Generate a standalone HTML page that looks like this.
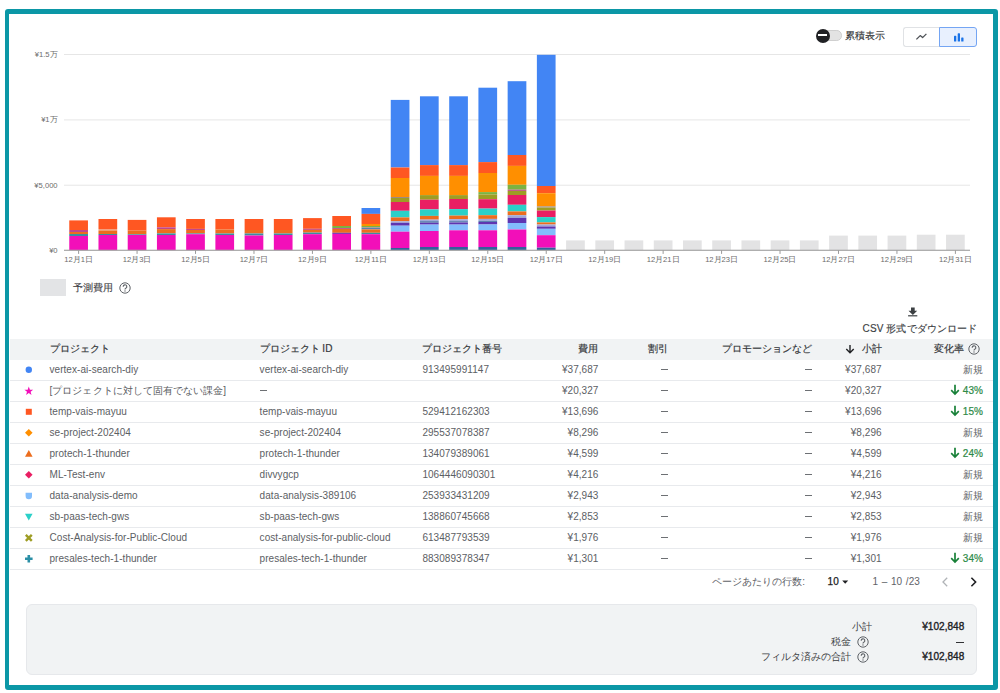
<!DOCTYPE html><html><head><meta charset="utf-8"><title>Billing report</title><style>
*{margin:0;padding:0;box-sizing:border-box}
html,body{width:1000px;height:693px;overflow:hidden;background:#fff}
body{position:relative;font-family:"Liberation Sans",sans-serif;color:#3c4043}
.frame{position:absolute;left:5px;top:9px;width:993px;height:681px;border-style:solid;border-color:#0b97a6;border-width:5px 5px 5px 4px;border-radius:3px}
.chart{position:absolute;left:0;top:0}
.xl{font-size:7.6px;fill:#6b6b6b;font-family:"Liberation Sans",sans-serif}
.yl{font-size:7.6px;fill:#6b6b6b;font-family:"Liberation Sans",sans-serif}
.abs{position:absolute;white-space:nowrap;line-height:1}
.t{font-size:10px;color:#5c6064;letter-spacing:0.05px}
.h{font-size:10px;color:#34373a;-webkit-text-stroke:0.18px #34373a}
.r{text-align:right}
.hdr{position:absolute;left:9.5px;top:339px;width:983px;height:20.5px;background:#f1f3f4}
.sep{position:absolute;left:9.5px;width:983px;height:1px;background:#e8eaed}
.green{color:#2d8a47;-webkit-text-stroke:0.2px #2d8a47}
.dash{position:absolute;width:7.2px;height:1.1px;background:#6d7074}
.sum{position:absolute;left:26px;top:604.2px;width:951px;height:71.3px;background:#f1f3f4;border:1px solid #e6e8eb;border-radius:6px}
</style></head><body>
<svg class="chart" width="1000" height="300" viewBox="0 0 1000 300">
<rect x="64.0" y="54.00" width="906.0" height="1" fill="#e6e6e6"/>
<rect x="64.0" y="119.40" width="906.0" height="1" fill="#e6e6e6"/>
<rect x="64.0" y="184.70" width="906.0" height="1" fill="#e6e6e6"/>
<rect x="69.26" y="220.40" width="18.7" height="9.60" fill="#ff5722"/>
<rect x="69.26" y="230.00" width="18.7" height="2.00" fill="#c2468a"/>
<rect x="69.26" y="232.00" width="18.7" height="2.00" fill="#ec6d1e"/>
<rect x="69.26" y="234.00" width="18.7" height="2.00" fill="#3a8fa0"/>
<rect x="69.26" y="236.00" width="18.7" height="14.30" fill="#f20fb9"/>
<rect x="98.49" y="219.00" width="18.7" height="10.00" fill="#ff5722"/>
<rect x="98.49" y="229.00" width="18.7" height="1.50" fill="#f4a080"/>
<rect x="98.49" y="230.50" width="18.7" height="3.50" fill="#ec6d1e"/>
<rect x="98.49" y="234.00" width="18.7" height="1.00" fill="#3a8fa0"/>
<rect x="98.49" y="235.00" width="18.7" height="15.30" fill="#f20fb9"/>
<rect x="127.71" y="219.90" width="18.7" height="10.70" fill="#ff5722"/>
<rect x="127.71" y="230.60" width="18.7" height="3.70" fill="#ec6d1e"/>
<rect x="127.71" y="234.30" width="18.7" height="0.70" fill="#3a8fa0"/>
<rect x="127.71" y="235.00" width="18.7" height="15.30" fill="#f20fb9"/>
<rect x="156.94" y="217.30" width="18.7" height="10.00" fill="#ff5722"/>
<rect x="156.94" y="227.30" width="18.7" height="1.80" fill="#c2468a"/>
<rect x="156.94" y="229.10" width="18.7" height="4.30" fill="#ec6d1e"/>
<rect x="156.94" y="233.40" width="18.7" height="1.60" fill="#3a8fa0"/>
<rect x="156.94" y="235.00" width="18.7" height="15.30" fill="#f20fb9"/>
<rect x="186.17" y="219.00" width="18.7" height="9.90" fill="#ff5722"/>
<rect x="186.17" y="228.90" width="18.7" height="1.10" fill="#c2468a"/>
<rect x="186.17" y="230.00" width="18.7" height="3.40" fill="#ec6d1e"/>
<rect x="186.17" y="233.40" width="18.7" height="0.80" fill="#3a8fa0"/>
<rect x="186.17" y="234.20" width="18.7" height="16.10" fill="#f20fb9"/>
<rect x="215.39" y="219.00" width="18.7" height="10.50" fill="#ff5722"/>
<rect x="215.39" y="229.50" width="18.7" height="4.00" fill="#ec6d1e"/>
<rect x="215.39" y="233.50" width="18.7" height="1.50" fill="#3a8fa0"/>
<rect x="215.39" y="235.00" width="18.7" height="15.30" fill="#f20fb9"/>
<rect x="244.62" y="219.00" width="18.7" height="11.00" fill="#ff5722"/>
<rect x="244.62" y="230.00" width="18.7" height="3.50" fill="#ec6d1e"/>
<rect x="244.62" y="233.50" width="18.7" height="2.00" fill="#3a8fa0"/>
<rect x="244.62" y="235.50" width="18.7" height="14.80" fill="#f20fb9"/>
<rect x="273.84" y="219.00" width="18.7" height="11.00" fill="#ff5722"/>
<rect x="273.84" y="230.00" width="18.7" height="3.50" fill="#ec6d1e"/>
<rect x="273.84" y="233.50" width="18.7" height="1.50" fill="#3a8fa0"/>
<rect x="273.84" y="235.00" width="18.7" height="15.30" fill="#f20fb9"/>
<rect x="303.07" y="218.10" width="18.7" height="10.70" fill="#ff5722"/>
<rect x="303.07" y="228.80" width="18.7" height="1.10" fill="#c2468a"/>
<rect x="303.07" y="229.90" width="18.7" height="2.70" fill="#ec6d1e"/>
<rect x="303.07" y="232.60" width="18.7" height="1.60" fill="#3a8fa0"/>
<rect x="303.07" y="234.20" width="18.7" height="16.10" fill="#f20fb9"/>
<rect x="332.30" y="216.00" width="18.7" height="10.00" fill="#ff5722"/>
<rect x="332.30" y="226.00" width="18.7" height="2.10" fill="#7cb342"/>
<rect x="332.30" y="228.10" width="18.7" height="0.90" fill="#c2468a"/>
<rect x="332.30" y="229.00" width="18.7" height="3.80" fill="#ec6d1e"/>
<rect x="332.30" y="232.80" width="18.7" height="1.10" fill="#5e35b1"/>
<rect x="332.30" y="233.90" width="18.7" height="16.40" fill="#f20fb9"/>
<rect x="361.52" y="208.00" width="18.7" height="5.90" fill="#4285f4"/>
<rect x="361.52" y="213.90" width="18.7" height="10.10" fill="#ff5722"/>
<rect x="361.52" y="224.00" width="18.7" height="2.00" fill="#ff8f00"/>
<rect x="361.52" y="226.00" width="18.7" height="1.20" fill="#7cb342"/>
<rect x="361.52" y="227.20" width="18.7" height="0.70" fill="#a08a80"/>
<rect x="361.52" y="227.90" width="18.7" height="1.50" fill="#5c7fb0"/>
<rect x="361.52" y="229.40" width="18.7" height="3.40" fill="#ec6d1e"/>
<rect x="361.52" y="232.80" width="18.7" height="1.40" fill="#3a8fa0"/>
<rect x="361.52" y="234.20" width="18.7" height="16.10" fill="#f20fb9"/>
<rect x="390.75" y="99.90" width="18.7" height="67.60" fill="#4285f4"/>
<rect x="390.75" y="167.50" width="18.7" height="10.50" fill="#ff5722"/>
<rect x="390.75" y="178.00" width="18.7" height="19.00" fill="#ff8f00"/>
<rect x="390.75" y="197.00" width="18.7" height="1.00" fill="#a08a80"/>
<rect x="390.75" y="198.00" width="18.7" height="4.00" fill="#9e9d24"/>
<rect x="390.75" y="202.00" width="18.7" height="8.80" fill="#e91e63"/>
<rect x="390.75" y="210.80" width="18.7" height="6.60" fill="#2bd0c8"/>
<rect x="390.75" y="217.40" width="18.7" height="3.90" fill="#ec6d1e"/>
<rect x="390.75" y="221.30" width="18.7" height="1.50" fill="#9fa8da"/>
<rect x="390.75" y="222.80" width="18.7" height="2.90" fill="#5e35b1"/>
<rect x="390.75" y="225.70" width="18.7" height="6.00" fill="#82bdfc"/>
<rect x="390.75" y="231.70" width="18.7" height="16.30" fill="#f20fb9"/>
<rect x="390.75" y="248.00" width="18.7" height="2.30" fill="#33609a"/>
<rect x="419.97" y="96.30" width="18.7" height="68.80" fill="#4285f4"/>
<rect x="419.97" y="165.10" width="18.7" height="10.80" fill="#ff5722"/>
<rect x="419.97" y="175.90" width="18.7" height="19.20" fill="#ff8f00"/>
<rect x="419.97" y="195.10" width="18.7" height="4.60" fill="#9e9d24"/>
<rect x="419.97" y="199.70" width="18.7" height="9.70" fill="#e91e63"/>
<rect x="419.97" y="209.40" width="18.7" height="6.50" fill="#2bd0c8"/>
<rect x="419.97" y="215.90" width="18.7" height="3.70" fill="#ec6d1e"/>
<rect x="419.97" y="219.60" width="18.7" height="1.50" fill="#9fa8da"/>
<rect x="419.97" y="221.10" width="18.7" height="1.70" fill="#5c7fb0"/>
<rect x="419.97" y="222.80" width="18.7" height="1.80" fill="#5e35b1"/>
<rect x="419.97" y="224.60" width="18.7" height="6.40" fill="#82bdfc"/>
<rect x="419.97" y="231.00" width="18.7" height="16.00" fill="#f20fb9"/>
<rect x="419.97" y="247.00" width="18.7" height="3.30" fill="#33609a"/>
<rect x="449.20" y="96.30" width="18.7" height="68.80" fill="#4285f4"/>
<rect x="449.20" y="165.10" width="18.7" height="10.80" fill="#ff5722"/>
<rect x="449.20" y="175.90" width="18.7" height="19.20" fill="#ff8f00"/>
<rect x="449.20" y="195.10" width="18.7" height="3.90" fill="#9e9d24"/>
<rect x="449.20" y="199.00" width="18.7" height="10.10" fill="#e91e63"/>
<rect x="449.20" y="209.10" width="18.7" height="6.50" fill="#2bd0c8"/>
<rect x="449.20" y="215.60" width="18.7" height="3.60" fill="#ec6d1e"/>
<rect x="449.20" y="219.20" width="18.7" height="1.90" fill="#9fa8da"/>
<rect x="449.20" y="221.10" width="18.7" height="1.40" fill="#5c7fb0"/>
<rect x="449.20" y="222.50" width="18.7" height="2.10" fill="#5e35b1"/>
<rect x="449.20" y="224.60" width="18.7" height="5.70" fill="#82bdfc"/>
<rect x="449.20" y="230.30" width="18.7" height="16.70" fill="#f20fb9"/>
<rect x="449.20" y="247.00" width="18.7" height="3.30" fill="#33609a"/>
<rect x="478.42" y="87.70" width="18.7" height="74.40" fill="#4285f4"/>
<rect x="478.42" y="162.10" width="18.7" height="10.90" fill="#ff5722"/>
<rect x="478.42" y="173.00" width="18.7" height="19.10" fill="#ff8f00"/>
<rect x="478.42" y="192.10" width="18.7" height="2.30" fill="#7cb342"/>
<rect x="478.42" y="194.40" width="18.7" height="4.80" fill="#9e9d24"/>
<rect x="478.42" y="199.20" width="18.7" height="9.40" fill="#e91e63"/>
<rect x="478.42" y="208.60" width="18.7" height="6.60" fill="#2bd0c8"/>
<rect x="478.42" y="215.20" width="18.7" height="3.70" fill="#ec6d1e"/>
<rect x="478.42" y="218.90" width="18.7" height="2.00" fill="#9fa8da"/>
<rect x="478.42" y="220.90" width="18.7" height="1.10" fill="#5c7fb0"/>
<rect x="478.42" y="222.00" width="18.7" height="2.50" fill="#5e35b1"/>
<rect x="478.42" y="224.50" width="18.7" height="5.80" fill="#82bdfc"/>
<rect x="478.42" y="230.30" width="18.7" height="16.70" fill="#f20fb9"/>
<rect x="478.42" y="247.00" width="18.7" height="3.30" fill="#33609a"/>
<rect x="507.65" y="81.20" width="18.7" height="73.80" fill="#4285f4"/>
<rect x="507.65" y="155.00" width="18.7" height="10.90" fill="#ff5722"/>
<rect x="507.65" y="165.90" width="18.7" height="18.90" fill="#ff8f00"/>
<rect x="507.65" y="184.80" width="18.7" height="4.90" fill="#7cb342"/>
<rect x="507.65" y="189.70" width="18.7" height="1.20" fill="#c2468a"/>
<rect x="507.65" y="190.90" width="18.7" height="4.10" fill="#9e9d24"/>
<rect x="507.65" y="195.00" width="18.7" height="9.80" fill="#e91e63"/>
<rect x="507.65" y="204.80" width="18.7" height="6.60" fill="#2bd0c8"/>
<rect x="507.65" y="211.40" width="18.7" height="3.80" fill="#ec6d1e"/>
<rect x="507.65" y="215.20" width="18.7" height="2.70" fill="#9fa8da"/>
<rect x="507.65" y="217.90" width="18.7" height="5.10" fill="#5e35b1"/>
<rect x="507.65" y="223.00" width="18.7" height="6.50" fill="#82bdfc"/>
<rect x="507.65" y="229.50" width="18.7" height="17.50" fill="#f20fb9"/>
<rect x="507.65" y="247.00" width="18.7" height="3.30" fill="#33609a"/>
<rect x="536.88" y="54.80" width="18.7" height="131.20" fill="#4285f4"/>
<rect x="536.88" y="186.00" width="18.7" height="7.20" fill="#ff5722"/>
<rect x="536.88" y="193.20" width="18.7" height="13.20" fill="#ff8f00"/>
<rect x="536.88" y="206.40" width="18.7" height="1.20" fill="#a08a80"/>
<rect x="536.88" y="207.60" width="18.7" height="3.00" fill="#9e9d24"/>
<rect x="536.88" y="210.60" width="18.7" height="6.50" fill="#e91e63"/>
<rect x="536.88" y="217.10" width="18.7" height="5.30" fill="#2bd0c8"/>
<rect x="536.88" y="222.40" width="18.7" height="2.10" fill="#ec6d1e"/>
<rect x="536.88" y="224.50" width="18.7" height="2.00" fill="#9fa8da"/>
<rect x="536.88" y="226.50" width="18.7" height="2.30" fill="#5e35b1"/>
<rect x="536.88" y="228.80" width="18.7" height="6.40" fill="#82bdfc"/>
<rect x="536.88" y="235.20" width="18.7" height="12.50" fill="#f20fb9"/>
<rect x="536.88" y="247.70" width="18.7" height="2.60" fill="#33609a"/>
<rect x="566.10" y="240.40" width="18.7" height="9.90" fill="#e3e3e4"/>
<rect x="595.33" y="240.40" width="18.7" height="9.90" fill="#e3e3e4"/>
<rect x="624.55" y="240.40" width="18.7" height="9.90" fill="#e3e3e4"/>
<rect x="653.78" y="240.40" width="18.7" height="9.90" fill="#e3e3e4"/>
<rect x="683.00" y="240.40" width="18.7" height="9.90" fill="#e3e3e4"/>
<rect x="712.23" y="240.40" width="18.7" height="9.90" fill="#e3e3e4"/>
<rect x="741.46" y="240.40" width="18.7" height="9.90" fill="#e3e3e4"/>
<rect x="770.68" y="240.40" width="18.7" height="9.90" fill="#e3e3e4"/>
<rect x="799.91" y="240.40" width="18.7" height="9.90" fill="#e3e3e4"/>
<rect x="829.13" y="235.60" width="18.7" height="14.70" fill="#e3e3e4"/>
<rect x="858.36" y="235.60" width="18.7" height="14.70" fill="#e3e3e4"/>
<rect x="887.59" y="235.60" width="18.7" height="14.70" fill="#e3e3e4"/>
<rect x="916.81" y="234.70" width="18.7" height="15.60" fill="#e3e3e4"/>
<rect x="946.04" y="234.70" width="18.7" height="15.60" fill="#e3e3e4"/>
<rect x="64.0" y="249.70" width="906.0" height="1.2" fill="#a6a6a6"/>
<rect x="78.11" y="250.3" width="1" height="3.6" fill="#9a9a9a"/>
<text x="78.61" y="261.9" text-anchor="middle" class="xl">12月1日</text>
<rect x="136.56" y="250.3" width="1" height="3.6" fill="#9a9a9a"/>
<text x="137.06" y="261.9" text-anchor="middle" class="xl">12月3日</text>
<rect x="195.02" y="250.3" width="1" height="3.6" fill="#9a9a9a"/>
<text x="195.52" y="261.9" text-anchor="middle" class="xl">12月5日</text>
<rect x="253.47" y="250.3" width="1" height="3.6" fill="#9a9a9a"/>
<text x="253.97" y="261.9" text-anchor="middle" class="xl">12月7日</text>
<rect x="311.92" y="250.3" width="1" height="3.6" fill="#9a9a9a"/>
<text x="312.42" y="261.9" text-anchor="middle" class="xl">12月9日</text>
<rect x="370.37" y="250.3" width="1" height="3.6" fill="#9a9a9a"/>
<text x="370.87" y="261.9" text-anchor="middle" class="xl">12月11日</text>
<rect x="428.82" y="250.3" width="1" height="3.6" fill="#9a9a9a"/>
<text x="429.32" y="261.9" text-anchor="middle" class="xl">12月13日</text>
<rect x="487.27" y="250.3" width="1" height="3.6" fill="#9a9a9a"/>
<text x="487.77" y="261.9" text-anchor="middle" class="xl">12月15日</text>
<rect x="545.73" y="250.3" width="1" height="3.6" fill="#9a9a9a"/>
<text x="546.23" y="261.9" text-anchor="middle" class="xl">12月17日</text>
<rect x="604.18" y="250.3" width="1" height="3.6" fill="#9a9a9a"/>
<text x="604.68" y="261.9" text-anchor="middle" class="xl">12月19日</text>
<rect x="662.63" y="250.3" width="1" height="3.6" fill="#9a9a9a"/>
<text x="663.13" y="261.9" text-anchor="middle" class="xl">12月21日</text>
<rect x="721.08" y="250.3" width="1" height="3.6" fill="#9a9a9a"/>
<text x="721.58" y="261.9" text-anchor="middle" class="xl">12月23日</text>
<rect x="779.53" y="250.3" width="1" height="3.6" fill="#9a9a9a"/>
<text x="780.03" y="261.9" text-anchor="middle" class="xl">12月25日</text>
<rect x="837.98" y="250.3" width="1" height="3.6" fill="#9a9a9a"/>
<text x="838.48" y="261.9" text-anchor="middle" class="xl">12月27日</text>
<rect x="896.44" y="250.3" width="1" height="3.6" fill="#9a9a9a"/>
<text x="896.94" y="261.9" text-anchor="middle" class="xl">12月29日</text>
<rect x="954.89" y="250.3" width="1" height="3.6" fill="#9a9a9a"/>
<text x="955.39" y="261.9" text-anchor="middle" class="xl">12月31日</text>
<text x="57.6" y="56.90" text-anchor="end" class="yl">¥1.5万</text>
<text x="57.6" y="122.30" text-anchor="end" class="yl">¥1万</text>
<text x="57.6" y="187.60" text-anchor="end" class="yl">¥5,000</text>
<text x="57.6" y="253.00" text-anchor="end" class="yl">¥0</text>
</svg>
<div class="abs" style="left:820.5px;top:30.4px;width:21px;height:10.4px;border-radius:5.2px;background:#e3e3e3;border:0.6px solid #cfcfcf"></div>
<div class="abs" style="left:815.6px;top:28.7px;width:14px;height:14px;border-radius:7px;background:#202124"></div>
<div class="abs" style="left:818.4px;top:34.3px;width:8.4px;height:1.5px;background:#fff"></div>
<div class="abs h" style="left:844.8px;top:30.6px;-webkit-text-stroke:0.1px #2d2f31;color:#2d2f31">累積表示</div>
<div class="abs" style="left:902.9px;top:27.4px;width:37px;height:19.2px;border:1px solid #e0e2e5;border-right:none;border-radius:3px 0 0 3px;background:#fff"></div>
<div class="abs" style="left:939.1px;top:27.4px;width:37.8px;height:19.2px;border:1px solid #74a5f3;border-radius:0 3px 3px 0;background:#e8f0fe"></div>
<svg class="abs" style="left:0;top:0" width="1000" height="60"><polyline points="916.4,39.4 920.2,35.6 922.6,37.6 926.4,33.9" fill="none" stroke="#4d5156" stroke-width="1.3" stroke-linejoin="round"/><rect x="954" y="35.8" width="2.3" height="5.8" rx="0.6" fill="#1a73e8"/><rect x="957.7" y="33.3" width="2.3" height="8.3" rx="0.6" fill="#1a73e8"/><rect x="961.2" y="37.5" width="2.3" height="4.1" rx="0.6" fill="#1a73e8"/></svg>
<div class="abs" style="left:40px;top:279px;width:26px;height:17.2px;background:#e3e4e6"></div>
<div class="abs h" style="left:72.8px;top:283px;color:#3f4246;-webkit-text-stroke:0.12px #3f4246">予測費用</div>
<svg class="abs" style="left:117.5px;top:280.8px" width="14" height="14" viewBox="0 0 14 14"><circle cx="7" cy="7" r="5.2" fill="none" stroke="#5f6368" stroke-width="1"/><path d="M5.2,5.7 a1.8,1.8 0 1 1 2.6,1.5 c-0.6,0.3 -0.8,0.6 -0.8,1.3" fill="none" stroke="#5f6368" stroke-width="1.15"/><circle cx="7" cy="10" r="0.65" fill="#5f6368"/></svg>
<svg class="abs" style="left:905px;top:303px" width="16" height="16" viewBox="0 0 16 16"><path d="M6,4.5 h3.7 v3.3 h2.5 l-4.35,4.1 l-4.35,-4.1 h2.5 z" fill="#3c4043"/><rect x="3.1" y="12.2" width="9.2" height="1.2" fill="#3c4043"/></svg>
<div class="abs t" style="left:862.6px;top:323.8px;color:#3c4043;letter-spacing:0.1px;-webkit-text-stroke:0.15px #3c4043">CSV 形式でダウンロード</div>
<div class="hdr"></div>
<div class="abs h" style="left:49.5px;top:343.5px">プロジェクト</div>
<div class="abs h" style="left:259.6px;top:343.5px">プロジェクト ID</div>
<div class="abs h" style="left:422.4px;top:343.5px">プロジェクト番号</div>
<div class="abs h r" style="right:401.6px;top:343.5px">費用</div>
<div class="abs h r" style="right:331.70000000000005px;top:343.5px">割引</div>
<div class="abs h r" style="right:188.39999999999998px;top:343.5px">プロモーションなど</div>
<div class="abs h r" style="right:118.39999999999998px;top:343.5px">小計</div>
<svg class="abs" style="left:844px;top:342px" width="12" height="13" viewBox="0 0 12 13"><path d="M6,3 V10.6 M2.3,7.1 L6,10.8 L9.7,7.1" fill="none" stroke="#202124" stroke-width="1.4"/></svg>
<div class="abs h r" style="right:36.5px;top:343.5px">変化率</div>
<svg class="abs" style="left:967.2px;top:341.6px" width="14" height="14" viewBox="0 0 14 14"><circle cx="7" cy="7" r="5.2" fill="none" stroke="#5f6368" stroke-width="1"/><path d="M5.2,5.7 a1.8,1.8 0 1 1 2.6,1.5 c-0.6,0.3 -0.8,0.6 -0.8,1.3" fill="none" stroke="#5f6368" stroke-width="1.15"/><circle cx="7" cy="10" r="0.65" fill="#5f6368"/></svg>
<div class="abs t" style="left:49.5px;top:364.8px">vertex-ai-search-diy</div>
<div class="abs t" style="left:259.6px;top:364.8px">vertex-ai-search-diy</div>
<div class="abs t" style="left:422.4px;top:364.8px">913495991147</div>
<div class="abs t r" style="right:401.6px;top:364.8px">¥37,687</div>
<div class="dash" style="left:661.2px;top:368.7px"></div>
<div class="dash" style="left:804.6px;top:368.7px"></div>
<div class="abs t r" style="right:118.39999999999998px;top:364.8px">¥37,687</div>
<div class="abs t r" style="right:17px;top:364.8px">新規</div>
<div class="sep" style="top:380.0px"></div>
<div class="abs t" style="left:49.5px;top:385.8px">[プロジェクトに対して固有でない課金]</div>
<div class="dash" style="left:259.6px;top:389.7px"></div>
<div class="abs t r" style="right:401.6px;top:385.8px">¥20,327</div>
<div class="dash" style="left:661.2px;top:389.7px"></div>
<div class="dash" style="left:804.6px;top:389.7px"></div>
<div class="abs t r" style="right:118.39999999999998px;top:385.8px">¥20,327</div>
<div class="abs t r green" style="right:17px;top:385.8px">43%</div>
<svg class="abs" style="left:949.2px;top:383.1px" width="12" height="13" viewBox="0 0 12 13"><path d="M6,1.8 V11 M2.2,7.2 L6,11 L9.8,7.2" fill="none" stroke="#188038" stroke-width="1.7"/></svg>
<div class="sep" style="top:401.0px"></div>
<div class="abs t" style="left:49.5px;top:406.8px">temp-vais-mayuu</div>
<div class="abs t" style="left:259.6px;top:406.8px">temp-vais-mayuu</div>
<div class="abs t" style="left:422.4px;top:406.8px">529412162303</div>
<div class="abs t r" style="right:401.6px;top:406.8px">¥13,696</div>
<div class="dash" style="left:661.2px;top:410.7px"></div>
<div class="dash" style="left:804.6px;top:410.7px"></div>
<div class="abs t r" style="right:118.39999999999998px;top:406.8px">¥13,696</div>
<div class="abs t r green" style="right:17px;top:406.8px">15%</div>
<svg class="abs" style="left:949.2px;top:404.1px" width="12" height="13" viewBox="0 0 12 13"><path d="M6,1.8 V11 M2.2,7.2 L6,11 L9.8,7.2" fill="none" stroke="#188038" stroke-width="1.7"/></svg>
<div class="sep" style="top:422.0px"></div>
<div class="abs t" style="left:49.5px;top:427.8px">se-project-202404</div>
<div class="abs t" style="left:259.6px;top:427.8px">se-project-202404</div>
<div class="abs t" style="left:422.4px;top:427.8px">295537078387</div>
<div class="abs t r" style="right:401.6px;top:427.8px">¥8,296</div>
<div class="dash" style="left:661.2px;top:431.7px"></div>
<div class="dash" style="left:804.6px;top:431.7px"></div>
<div class="abs t r" style="right:118.39999999999998px;top:427.8px">¥8,296</div>
<div class="abs t r" style="right:17px;top:427.8px">新規</div>
<div class="sep" style="top:443.0px"></div>
<div class="abs t" style="left:49.5px;top:448.8px">protech-1-thunder</div>
<div class="abs t" style="left:259.6px;top:448.8px">protech-1-thunder</div>
<div class="abs t" style="left:422.4px;top:448.8px">134079389061</div>
<div class="abs t r" style="right:401.6px;top:448.8px">¥4,599</div>
<div class="dash" style="left:661.2px;top:452.7px"></div>
<div class="dash" style="left:804.6px;top:452.7px"></div>
<div class="abs t r" style="right:118.39999999999998px;top:448.8px">¥4,599</div>
<div class="abs t r green" style="right:17px;top:448.8px">24%</div>
<svg class="abs" style="left:949.2px;top:446.1px" width="12" height="13" viewBox="0 0 12 13"><path d="M6,1.8 V11 M2.2,7.2 L6,11 L9.8,7.2" fill="none" stroke="#188038" stroke-width="1.7"/></svg>
<div class="sep" style="top:464.0px"></div>
<div class="abs t" style="left:49.5px;top:469.8px">ML-Test-env</div>
<div class="abs t" style="left:259.6px;top:469.8px">divvygcp</div>
<div class="abs t" style="left:422.4px;top:469.8px">1064446090301</div>
<div class="abs t r" style="right:401.6px;top:469.8px">¥4,216</div>
<div class="dash" style="left:661.2px;top:473.7px"></div>
<div class="dash" style="left:804.6px;top:473.7px"></div>
<div class="abs t r" style="right:118.39999999999998px;top:469.8px">¥4,216</div>
<div class="abs t r" style="right:17px;top:469.8px">新規</div>
<div class="sep" style="top:485.0px"></div>
<div class="abs t" style="left:49.5px;top:490.8px">data-analysis-demo</div>
<div class="abs t" style="left:259.6px;top:490.8px">data-analysis-389106</div>
<div class="abs t" style="left:422.4px;top:490.8px">253933431209</div>
<div class="abs t r" style="right:401.6px;top:490.8px">¥2,943</div>
<div class="dash" style="left:661.2px;top:494.7px"></div>
<div class="dash" style="left:804.6px;top:494.7px"></div>
<div class="abs t r" style="right:118.39999999999998px;top:490.8px">¥2,943</div>
<div class="abs t r" style="right:17px;top:490.8px">新規</div>
<div class="sep" style="top:506.0px"></div>
<div class="abs t" style="left:49.5px;top:511.8px">sb-paas-tech-gws</div>
<div class="abs t" style="left:259.6px;top:511.8px">sb-paas-tech-gws</div>
<div class="abs t" style="left:422.4px;top:511.8px">138860745668</div>
<div class="abs t r" style="right:401.6px;top:511.8px">¥2,853</div>
<div class="dash" style="left:661.2px;top:515.7px"></div>
<div class="dash" style="left:804.6px;top:515.7px"></div>
<div class="abs t r" style="right:118.39999999999998px;top:511.8px">¥2,853</div>
<div class="abs t r" style="right:17px;top:511.8px">新規</div>
<div class="sep" style="top:527.0px"></div>
<div class="abs t" style="left:49.5px;top:532.8px">Cost-Analysis-for-Public-Cloud</div>
<div class="abs t" style="left:259.6px;top:532.8px">cost-analysis-for-public-cloud</div>
<div class="abs t" style="left:422.4px;top:532.8px">613487793539</div>
<div class="abs t r" style="right:401.6px;top:532.8px">¥1,976</div>
<div class="dash" style="left:661.2px;top:536.7px"></div>
<div class="dash" style="left:804.6px;top:536.7px"></div>
<div class="abs t r" style="right:118.39999999999998px;top:532.8px">¥1,976</div>
<div class="abs t r" style="right:17px;top:532.8px">新規</div>
<div class="sep" style="top:548.0px"></div>
<div class="abs t" style="left:49.5px;top:553.8px">presales-tech-1-thunder</div>
<div class="abs t" style="left:259.6px;top:553.8px">presales-tech-1-thunder</div>
<div class="abs t" style="left:422.4px;top:553.8px">883089378347</div>
<div class="abs t r" style="right:401.6px;top:553.8px">¥1,301</div>
<div class="dash" style="left:661.2px;top:557.7px"></div>
<div class="dash" style="left:804.6px;top:557.7px"></div>
<div class="abs t r" style="right:118.39999999999998px;top:553.8px">¥1,301</div>
<div class="abs t r green" style="right:17px;top:553.8px">34%</div>
<svg class="abs" style="left:949.2px;top:551.1px" width="12" height="13" viewBox="0 0 12 13"><path d="M6,1.8 V11 M2.2,7.2 L6,11 L9.8,7.2" fill="none" stroke="#188038" stroke-width="1.7"/></svg>
<div class="sep" style="top:569.0px"></div>
<svg class="abs" style="left:0;top:0" width="60" height="600"><circle cx="28.8" cy="369.8" r="3.2" fill="#4285f4"/><polygon points="28.80,386.60 29.92,389.66 33.17,389.78 30.61,391.79 31.50,394.92 28.80,393.10 26.10,394.92 26.99,391.79 24.43,389.78 27.68,389.66" fill="#f20fb9"/><rect x="25.8" y="408.8" width="6" height="6" fill="#ff5722"/><polygon points="28.8,429.0 32.6,432.8 28.8,436.6 25.0,432.8" fill="#ff8f00"/><polygon points="28.8,450.0 32.6,456.8 25.0,456.8" fill="#ec6d1e"/><polygon points="28.8,471.0 32.6,474.8 28.8,478.6 25.0,474.8" fill="#e91e63"/><path d="M25.6,492.8 h6.4 v3.2 a3.2,3.2 0 0 1 -6.4,0 z" fill="#82bdfc"/><polygon points="25.0,513.8 32.6,513.8 28.8,520.5999999999999" fill="#2bd0c8"/><path d="M25.8,534.8 L31.8,540.8 M31.8,534.8 L25.8,540.8" stroke="#9e9d24" stroke-width="2.4"/><path d="M25.0,558.8 H32.6 M28.8,555.0 V562.5999999999999" stroke="#2b8fa6" stroke-width="2.6"/></svg>
<div class="abs t" style="left:711.7px;top:576.5px;color:#5f6368">ページあたりの行数:</div>
<div class="abs h" style="left:827.6px;top:576.5px;color:#202124;-webkit-text-stroke:0.25px #202124">10</div>
<svg class="abs" style="left:840px;top:576.5px" width="12" height="10"><path d="M2.2,3.4 h6 l-3,3.3 z" fill="#202124"/></svg>
<div class="abs t" style="left:872.5px;top:576.5px;color:#5f6368;word-spacing:0.8px">1 – 10 /23</div>
<svg class="abs" style="left:938px;top:575px" width="40" height="14"><path d="M9.2,2.8 L5,7 L9.2,11.2" fill="none" stroke="#b0b3b7" stroke-width="1.3"/><path d="M33.4,2.8 L37.6,7 L33.4,11.2" fill="none" stroke="#202124" stroke-width="1.6"/></svg>
<div class="sum"></div>
<div class="abs t r" style="right:128px;top:622.4px;color:#3c4043">小計</div>
<div class="abs t r" style="right:35.7px;top:622.4px;color:#202124;-webkit-text-stroke:0.35px #202124">¥102,848</div>
<div class="abs t r" style="right:148.5px;top:637px;color:#3c4043">税金</div>
<svg class="abs" style="left:856.4px;top:635.2px" width="14" height="14" viewBox="0 0 14 14"><circle cx="7" cy="7" r="5.2" fill="none" stroke="#5f6368" stroke-width="1"/><path d="M5.2,5.7 a1.8,1.8 0 1 1 2.6,1.5 c-0.6,0.3 -0.8,0.6 -0.8,1.3" fill="none" stroke="#5f6368" stroke-width="1.15"/><circle cx="7" cy="10" r="0.65" fill="#5f6368"/></svg>
<div class="dash" style="left:956px;top:641.8px;width:8px;background:#303134"></div>
<div class="abs t r" style="right:148.5px;top:651.7px;color:#3c4043">フィルタ済みの合計</div>
<svg class="abs" style="left:856.4px;top:649.9px" width="14" height="14" viewBox="0 0 14 14"><circle cx="7" cy="7" r="5.2" fill="none" stroke="#5f6368" stroke-width="1"/><path d="M5.2,5.7 a1.8,1.8 0 1 1 2.6,1.5 c-0.6,0.3 -0.8,0.6 -0.8,1.3" fill="none" stroke="#5f6368" stroke-width="1.15"/><circle cx="7" cy="10" r="0.65" fill="#5f6368"/></svg>
<div class="abs t r" style="right:35.7px;top:651.7px;color:#202124;-webkit-text-stroke:0.35px #202124">¥102,848</div>
<div class="frame"></div>
</body></html>
